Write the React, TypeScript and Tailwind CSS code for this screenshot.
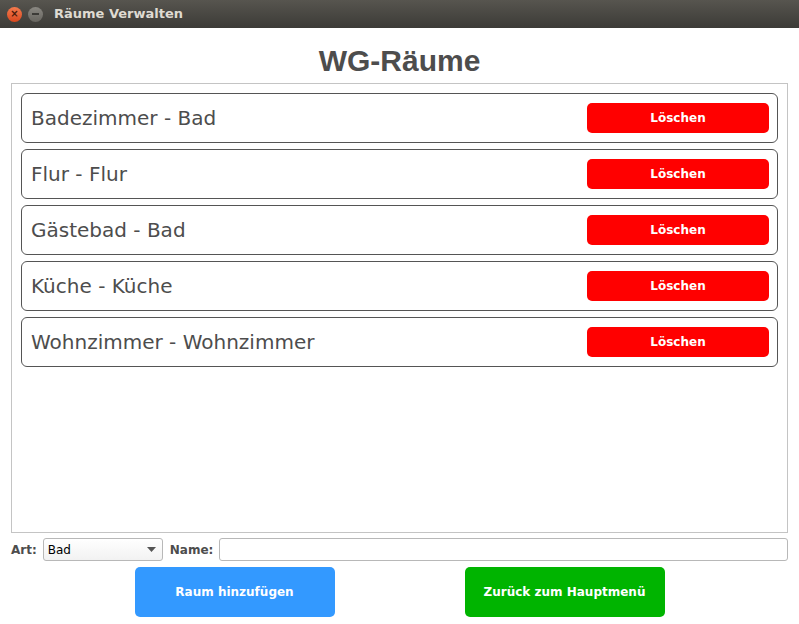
const rooms = [
  "Badezimmer - Bad",
  "Flur - Flur",
  "Gästebad - Bad",
  "Küche - Küche",
  "Wohnzimmer - Wohnzimmer",
];

export default function App() {
  return (
    <div className="w-[799px] h-[624px] flex flex-col bg-white overflow-hidden font-['DejaVu_Sans',sans-serif]">
      {/* Window title bar */}
      <div className="h-[28px] flex items-center bg-gradient-to-b from-[#57554f] to-[#3c3b37] px-[7px] gap-[6px]">
        <div className="w-[15px] h-[15px] rounded-full bg-gradient-to-b from-[#f37a4d] to-[#d9471c] flex items-center justify-center text-[#4a1a0a] text-[10px] leading-none font-bold">
          ×
        </div>
        <div className="w-[15px] h-[15px] rounded-full bg-gradient-to-b from-[#8a8882] to-[#67655f] flex items-center justify-center">
          <div className="w-[7px] h-[2px] bg-[#3c3b37]" />
        </div>
        <span className="ml-[5px] text-[13px] font-bold text-[#dfdbd2]">Räume Verwalten</span>
      </div>

      {/* Heading */}
      <div className="h-[55px] flex items-center justify-center pt-[10px]">
        <h1 className="font-['Liberation_Sans',Arial,sans-serif] font-bold text-[30px] text-[#4d4d4d]">
          WG-Räume
        </h1>
      </div>

      {/* Room list */}
      <div className="mx-[11px] h-[450px] border border-[#c4c4c4] px-[9px] pt-[9px] flex flex-col gap-[6px]">
        {rooms.map((r) => (
          <div
            key={r}
            className="h-[50px] border border-[#555] rounded-[6px] flex items-center justify-between pl-[9px] pr-[8px]"
          >
            <span className="text-[20px] text-[#4d4d4d]">{r}</span>
            <button className="w-[182px] h-[30px] rounded-[5px] bg-[#ff0000] text-white text-[12px] font-bold">
              Löschen
            </button>
          </div>
        ))}
      </div>

      {/* Form row */}
      <div className="mt-[5px] mx-[11px] h-[23px] flex items-center text-[12px] font-bold text-[#4d4d4d]">
        <span>Art:</span>
        <div className="ml-[6px] w-[120px] h-[23px] border border-[#b8b8b8] rounded-[3px] bg-gradient-to-b from-white to-[#f2f2f2] flex items-center justify-between pl-[4px] pr-[6px]">
          <span className="font-normal text-black text-[12px]">Bad</span>
          <svg width="9" height="5" viewBox="0 0 9 5">
            <path d="M0 0 L9 0 L4.5 5 Z" fill="#555" />
          </svg>
        </div>
        <span className="ml-[7px]">Name:</span>
        <div className="ml-[6px] flex-1 h-[23px] border border-[#b8b8b8] rounded-[3px] bg-white" />
      </div>

      {/* Buttons */}
      <div className="mt-[6px] flex justify-center gap-[130px]">
        <button className="w-[200px] h-[50px] rounded-[5px] bg-[#3399ff] text-white text-[12px] font-bold">
          Raum hinzufügen
        </button>
        <button className="w-[200px] h-[50px] rounded-[5px] bg-[#00b400] text-white text-[12px] font-bold">
          Zurück zum Hauptmenü
        </button>
      </div>
    </div>
  );
}
